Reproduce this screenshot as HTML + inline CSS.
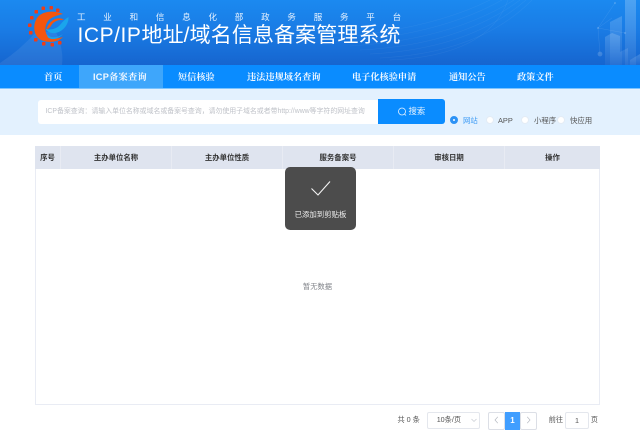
<!DOCTYPE html>
<html lang="zh-CN">
<head>
<meta charset="utf-8">
<title>ICP/IP地址/域名信息备案管理系统</title>
<style>
html,body{margin:0;padding:0;width:640px;height:445px;overflow:hidden;background:#fff}
body{position:relative;font-family:"Liberation Sans","Noto Sans CJK SC",sans-serif;color:#606266}
#w{position:absolute;left:0;top:0;width:640px;height:445px;filter:blur(.3px)}
.a{position:absolute;white-space:nowrap}
.n{top:71px;font-size:9.2px;line-height:12px;font-weight:700;color:#f2f8ff;font-family:"Liberation Sans","Noto Serif CJK SC",serif}
.th{top:146px;height:23px;line-height:23px;background:#dfe4ef;text-align:center;font-size:7.400px;font-weight:700;color:#333;border-right:1px solid #e8ebf3;box-sizing:border-box}
.r{top:116px;width:8px;height:8px;border-radius:50%;background:#fff;border:1px solid #e3ecf5;box-sizing:border-box}
.rl{top:114.500px;font-size:7.400px;line-height:12px;color:#555}
.box{background:#fff;border:1px solid #dcdfe6;box-sizing:border-box;border-radius:2px}
.p{font-size:7.200px;line-height:12px;color:#555}
</style>
</head>
<body>
<div id="w">
<div class="a" style="left:-4px;top:-4px;width:648px;height:69px;background:linear-gradient(180deg,#1b8bf1 0%,#1a7de6 45%,#1665cf 100%)"></div>
<svg class="a" style="left:0;top:0" width="640" height="65" viewBox="0 0 640 65">
<defs>
<linearGradient id="b" x1="0" y1="0" x2="0" y2="1"><stop offset="0" stop-color="#fff" stop-opacity=".17"/><stop offset="1" stop-color="#fff" stop-opacity=".04"/></linearGradient>
<linearGradient id="c" x1="0" y1="0" x2="0" y2="1"><stop offset="0" stop-color="#fff" stop-opacity=".22"/><stop offset="1" stop-color="#fff" stop-opacity=".06"/></linearGradient>
</defs>
<path d="M0 63 Q20 50 36 32 L56 32 Q64 50 62 65 L0 65Z" fill="#fff" opacity=".07"/>
<g fill="none" stroke="#fff" stroke-opacity=".06" stroke-width=".6">
<path d="M360 50 Q460 45 520 0"/><path d="M370 54 Q470 49 526 0"/><path d="M380 58 Q480 53 532 0"/><path d="M390 60 Q488 56 508 0"/><path d="M350 46 Q450 40 514 0"/><path d="M340 42 Q440 35 502 0"/><path d="M330 38 Q430 30 490 0"/>
</g>
<path d="M625 0h11v65h-11z" fill="url(#c)"/>
<path d="M610 22 L622 16 V65 H610Z" fill="url(#b)"/>
<path d="M605 37 L612 33 L620 36 V65 H605Z" fill="url(#b)"/>
<path d="M620 52 L628 48 V65 H620Z" fill="url(#b)" opacity=".7"/>
<path d="M630 60 L640 54 V65 H630Z" fill="url(#b)"/>
<g stroke="#fff" stroke-opacity=".12" stroke-width=".5" fill="none"><path d="M598 28 L615 3 M598 28 L612 18 M598 28 L600 54 M598 28 L625 33"/></g>
<g fill="#fff" opacity=".16"><circle cx="600" cy="54" r="2.400"/><circle cx="598" cy="28" r="1.100"/><circle cx="615" cy="3" r="1.100"/><circle cx="625" cy="33" r="1.100"/></g>
</svg>
<svg class="a" style="left:26px;top:5px" width="44" height="44" viewBox="0 0 44 44">
<g fill="#ee3d17">
<rect x="15.500" y="1.500" width="3.500" height="3.500" rx=".8"/><rect x="23.500" y="1" width="3.500" height="3.500" rx=".8"/><rect x="30" y="3.500" width="3.500" height="3.500" rx=".8"/>
<rect x="8.500" y="5" width="3.500" height="3.500" rx=".8"/><rect x="4" y="11" width="3.500" height="3.500" rx=".8"/><rect x="2" y="18.500" width="3.500" height="3.500" rx=".8"/>
<rect x="3" y="26" width="3.500" height="3.500" rx=".8"/><rect x="8" y="33" width="3.500" height="3.500" rx=".8"/><rect x="16" y="37" width="3.500" height="3.500" rx=".8"/>
<rect x="24.500" y="38" width="3.500" height="3.500" rx=".8"/><rect x="32" y="36" width="3.500" height="3.500" rx=".8"/>
</g>
<path d="M37 9 C28 5 16 6 11 13 C6 21 8 31 15 35 C23 38.500 32 37 37 32 C30 34.500 24 34 21 30 C18 26 19 18 24 14 C28 11 33 10 37 9Z" fill="#f4560d"/>
<path d="M20 30 C19 23 24 15 31 13.500 C35 13 37 14 38 15 C33 14.500 28 16 25.500 20 C24 23 22 24 20 25Z" fill="#f4560d"/>
<path d="M42.500 12 C43 19 37 27 29 28 C25 28.500 21 27 20 24 C25 25.500 31 23.500 34 20 C36.500 17 39 14 42.500 12Z" fill="#1aa5ec"/>
<path d="M20 28 C23 33 30 34 37 29 C33 34 26 35.500 22 32.500Z" fill="#1aa2ea"/>
</svg>
<div class="a" style="left:77px;top:9.500px;font-size:8.500px;line-height:14px;color:#e8f3ff;letter-spacing:17.800px">工业和信息化部政务服务平台</div>
<div class="a" style="left:77.500px;top:21px;font-size:21px;line-height:30px;color:#fff;letter-spacing:.1px"><span style="letter-spacing:.55px">ICP/IP</span>地址/域名信息备案管理系统</div>

<div class="a" style="left:-4px;top:65px;width:648px;height:23px;background:#0a8cff"></div>
<div class="a" style="left:79px;top:65px;width:84px;height:23px;background:#3ea6fb"></div>
<div class="a n" style="left:44px">首页</div>
<div class="a n" style="left:93px;letter-spacing:.25px">ICP备案查询</div>
<div class="a n" style="left:178px">短信核验</div>
<div class="a n" style="left:247px">违法违规域名查询</div>
<div class="a n" style="left:352px">电子化核验申请</div>
<div class="a n" style="left:449px">通知公告</div>
<div class="a n" style="left:517px">政策文件</div>

<div class="a" style="left:-4px;top:88px;width:648px;height:1px;background:#7cc4ff"></div>
<div class="a" style="left:-4px;top:89px;width:648px;height:46px;background:#e3f1fe"></div>
<div class="a" style="left:38px;top:100px;width:342px;height:24px;background:#fff;border-radius:3px"></div>
<div class="a" style="left:45.500px;top:106px;font-size:6.900px;line-height:12px;color:#bfc2c8">ICP备案查询：请输入单位名称或域名或备案号查询，请勿使用子域名或者带http://www等字符的网址查询</div>
<div class="a" style="left:378px;top:99px;width:67px;height:25px;background:#0a8cff;border-radius:0 3px 3px 0"></div>
<svg class="a" style="left:397px;top:106px" width="11" height="11" viewBox="0 0 11 11"><circle cx="5" cy="5.500" r="3.500" fill="none" stroke="#e8f3ff" stroke-width=".8"/><path d="M7.500 8L9 9.500" stroke="#e8f3ff" stroke-width=".8"/></svg>
<div class="a" style="left:408.500px;top:105px;font-size:8.400px;line-height:13px;color:#e8f3ff">搜索</div>

<div class="a" style="left:450px;top:116px;width:8px;height:8px;border-radius:50%;background:#fff;border:3px solid #2c92f5;box-sizing:border-box"></div>
<div class="a rl" style="left:463px;color:#3d9bf5">网站</div>
<div class="a r" style="left:486px"></div>
<div class="a rl" style="left:498px">APP</div>
<div class="a r" style="left:521px"></div>
<div class="a rl" style="left:534px">小程序</div>
<div class="a r" style="left:557px"></div>
<div class="a rl" style="left:570px">快应用</div>

<div class="a" style="left:35px;top:146px;width:565px;height:259px;border:1px solid #e9ecf4;box-sizing:border-box"></div>
<div class="a th" style="left:35px;width:26px">序号</div>
<div class="a th" style="left:61px;width:111px">主办单位名称</div>
<div class="a th" style="left:172px;width:111px">主办单位性质</div>
<div class="a th" style="left:283px;width:111px">服务备案号</div>
<div class="a th" style="left:394px;width:111px">审核日期</div>
<div class="a th" style="left:505px;width:95px;border-right:0">操作</div>
<div class="a" style="left:35px;top:281px;width:565px;text-align:center;font-size:7.300px;line-height:12px;color:#808389">暂无数据</div>

<div class="a" style="left:285px;top:167px;width:71px;height:63px;background:#4c4c4c;border-radius:5px"></div>
<svg class="a" style="left:309px;top:179px" width="24" height="20" viewBox="0 0 24 20"><path d="M2.500 9.500L9 16L21 2.500" fill="none" stroke="#f4f4f4" stroke-width="1.100"/></svg>
<div class="a" style="left:285px;top:209px;width:71px;text-align:center;font-size:7.400px;line-height:12px;color:#eee">已添加到剪贴板</div>

<div class="a p" style="left:397.500px;top:414px">共 0 条</div>
<div class="a box" style="left:427px;top:412px;width:53px;height:17px;border-color:#e4e7ed"></div>
<div class="a p" style="left:436.700px;top:414px">10条/页</div>
<svg class="a" style="left:471px;top:418px" width="6" height="5" viewBox="0 0 6 5"><path d="M.5 1L3 3.500L5.500 1" fill="none" stroke="#c0c4cc" stroke-width=".6"/></svg>
<div class="a box" style="left:488px;top:412px;width:17px;height:18px;border-color:#dcdfe6"></div>
<svg class="a" style="left:494px;top:416px" width="5" height="8" viewBox="0 0 5 8"><path d="M3.800 .8L1 4L3.800 7.200" fill="none" stroke="#b4b8c0" stroke-width=".7"/></svg>
<div class="a" style="left:505px;top:412px;width:15px;height:18px;background:#409eff;color:#fff;text-align:center;font-size:8px;line-height:18px;font-weight:700">1</div>
<div class="a box" style="left:520px;top:412px;width:17px;height:18px;border-color:#dcdfe6"></div>
<svg class="a" style="left:526px;top:416px" width="5" height="8" viewBox="0 0 5 8"><path d="M1.200 .8L4 4L1.200 7.200" fill="none" stroke="#b4b8c0" stroke-width=".7"/></svg>
<div class="a p" style="left:548.700px;top:414px">前往</div>
<div class="a box p" style="left:565px;top:412px;width:24px;height:17px;border-color:#e4e7ed;text-align:center;line-height:15px">1</div>
<div class="a p" style="left:590.700px;top:414px">页</div>
</div>
</body>
</html>
